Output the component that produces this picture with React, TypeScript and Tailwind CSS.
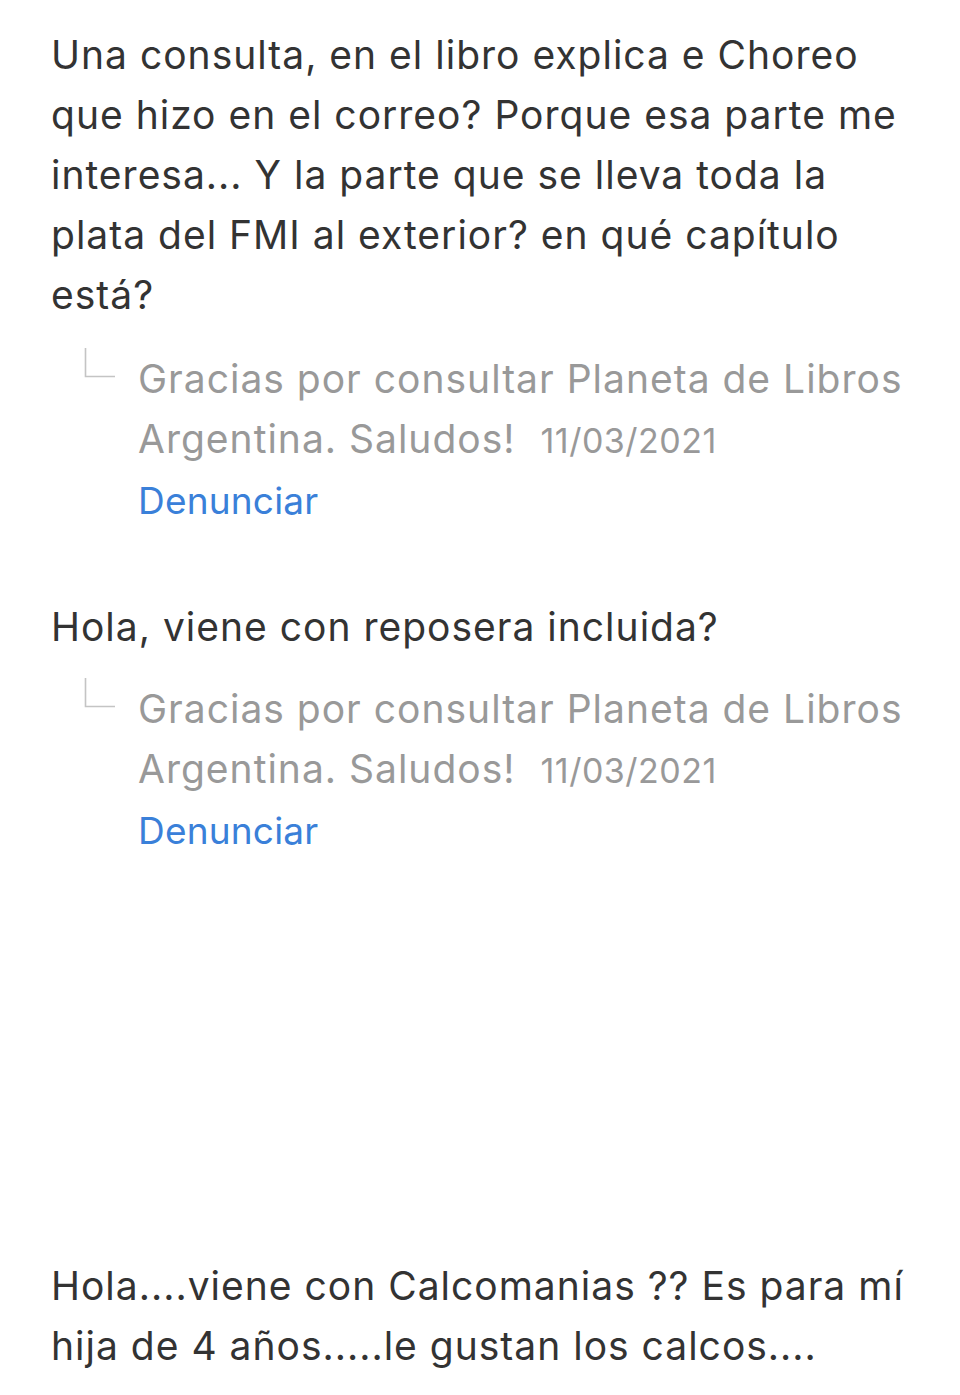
function Reply({ top }: { top: string }) {
  return (
    <div className={"flex " + top}>
      <div className="w-[87px] shrink-0 pl-[33px]">
        <svg width="32" height="32" viewBox="0 0 32 32" className="mt-[-1px]">
          <path d="M1.5 0 V28.5 H31" fill="none" stroke="#c4c4c4" strokeWidth="1.6" />
        </svg>
      </div>
      <div>
        <div className="text-[#999999] leading-[60px] whitespace-nowrap">
          <div>Gracias por consultar Planeta de Libros</div>
          <div>
            Argentina. Saludos!
            <span className="ml-[25px] text-[34px] tracking-[0.5px]">11/03/2021</span>
          </div>
        </div>
        <div className="text-[#3a80d9] leading-[60px] text-[37px] tracking-[0.2px]">Denunciar</div>
      </div>
    </div>
  );
}

export default function App() {
  return (
    <div
      className="bg-white w-[960px] h-[1395px] overflow-hidden text-[39px] tracking-[1px] text-[#333333] pl-[51px] pt-[25px]"
      style={{ fontFamily: "Inter, 'Noto Sans', sans-serif" }}
    >
      <div className="leading-[60px] whitespace-nowrap">
        <div>Una consulta, en el libro explica e Choreo</div>
        <div>que hizo en el correo? Porque esa parte me</div>
        <div>interesa... Y la parte que se lleva toda la</div>
        <div>plata del FMI al exterior? en qué capítulo</div>
        <div>está?</div>
      </div>
      <Reply top="mt-[24px]" />
      <div className="leading-[60px] whitespace-nowrap mt-[66px]">
        <div>Hola, viene con reposera incluida?</div>
      </div>
      <Reply top="mt-[22px]" />
      <div className="leading-[60px] whitespace-nowrap mt-[395px]">
        <div>Hola....viene con Calcomanias ?? Es para mí</div>
        <div>hija de 4 años.....le gustan los calcos....</div>
      </div>
    </div>
  );
}
